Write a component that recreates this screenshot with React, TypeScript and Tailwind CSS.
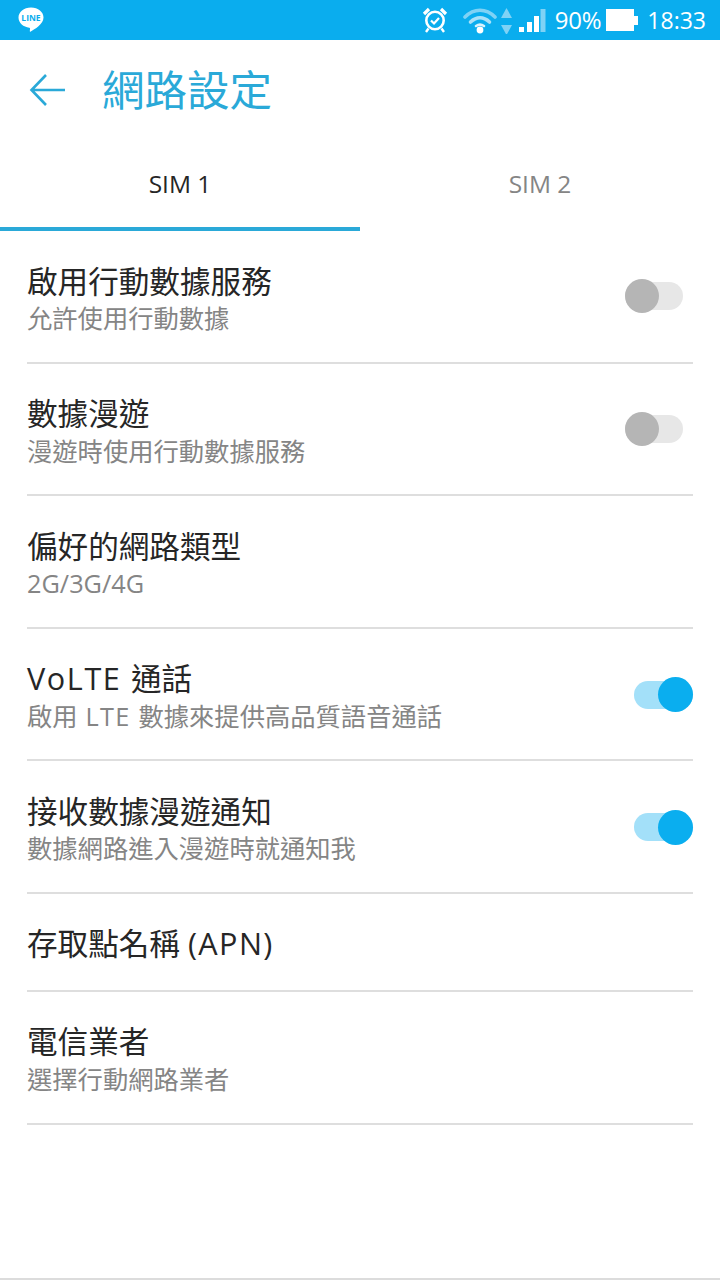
import type { ReactNode } from 'react';

const FONT = "font-['Open_Sans','Noto_Sans_CJK_TC',sans-serif]";

interface RowProps {
  title: ReactNode;
  subtitle?: ReactNode;
  toggle?: 'on' | 'off';
  short?: boolean;
}

const rows: RowProps[] = [
  { title: '啟用行動數據服務', subtitle: '允許使用行動數據', toggle: 'off' },
  { title: '數據漫遊', subtitle: '漫遊時使用行動數據服務', toggle: 'off' },
  { title: '偏好的網路類型', subtitle: '2G/3G/4G' },
  {
    title: (
      <>
        <span className="tracking-[1.6px]">VoLTE </span>通話
      </>
    ),
    subtitle: (
      <>
        啟用<span className="tracking-[1.3px]"> LTE </span>數據來提供高品質語音通話
      </>
    ),
    toggle: 'on',
  },
  { title: '接收數據漫遊通知', subtitle: '數據網路進入漫遊時就通知我', toggle: 'on' },
  {
    title: (
      <>
        存取點名稱 <span className="tracking-[1.4px]">(APN)</span>
      </>
    ),
    short: true,
  },
  { title: '電信業者', subtitle: '選擇行動網路業者' },
];

function Toggle({ on }: { on: boolean }) {
  if (on) {
    return (
      <div className="flex h-[28px] w-[59px] items-center justify-end rounded-full bg-[#a3e0f9]">
        <div className="h-[35px] w-[35px] shrink-0 rounded-full bg-[#0aaeef]" />
      </div>
    );
  }
  return (
    <div className="mr-[10px] flex h-[28px] w-[58px] items-center rounded-full bg-[#e7e7e7]">
      <div className="h-[34px] w-[34px] shrink-0 rounded-full bg-[#b5b5b5]" />
    </div>
  );
}

function Row(props: RowProps) {
  return (
    <div
      className={`mx-[27px] flex items-start justify-between border-b-2 border-[#dedede] ${
        props.short ? 'h-[98px]' : 'h-[132.6px]'
      }`}
    >
      <div className="pt-[29.5px]">
        <p className="text-[30.6px] leading-[40px] text-[#262626]">{props.title}</p>
        {props.subtitle && (
          <p className="mt-[-0.5px] text-[25.3px] leading-[36px] text-[#858585]">{props.subtitle}</p>
        )}
      </div>
      {props.toggle && (
        <div className={props.toggle === 'on' ? 'pt-[52px]' : 'pt-[51px]'}>
          <Toggle on={props.toggle === 'on'} />
        </div>
      )}
    </div>
  );
}

function StatusBar() {
  return (
    <div className="flex h-[40px] items-center justify-between bg-[#0aadee] pl-[17px] pr-[14px] text-white">
      <svg width="28" height="28" viewBox="0 0 28 28">
        <path
          d="M14 1.5C6.8 1.5 1.5 6 1.5 11.6c0 5.4 5 9.6 10.8 10.2.6.1.8.5.7 1.1l-.2 2c-.1.7.4 1 1 .6 3.6-2.2 12.7-7.2 12.7-14C26.5 6 21.2 1.5 14 1.5z"
          fill="#fff"
        />
        <text
          x="14"
          y="15"
          textAnchor="middle"
          fontSize="8.5"
          fontWeight="700"
          fill="#0aadee"
          fontFamily="Open Sans, sans-serif"
        >
          LINE
        </text>
      </svg>
      <div className="flex items-center">
        <svg width="26" height="28" viewBox="0 0 26 28" fill="none" stroke="#fff" strokeWidth="2.6">
          <circle cx="13" cy="14.5" r="8.7" />
          <path d="M9 14.5l3 3 5-5.5" strokeWidth="2.2" />
          <path d="M2 8L7 3M24 8L19 3" strokeWidth="3.2" />
          <path d="M6.5 22.5l-2.5 3.5M19.5 22.5l2.5 3.5" strokeWidth="2.4" />
        </svg>
        <svg className="ml-[15px]" width="34" height="28" viewBox="0 0 34 28" fill="none" strokeLinecap="round">
          <path d="M2 11C11 2 23 2 32 11" stroke="#7fd2f5" strokeWidth="3.6" />
          <path d="M7.5 16c6-5.5 13-5.5 19 0" stroke="#a9e1f9" strokeWidth="3.6" />
          <path d="M13 20c2.6-1.8 5.4-1.8 8 0" stroke="#d9f2fc" strokeWidth="2.6" />
          <circle cx="17" cy="24" r="3.4" fill="#fff" />
        </svg>
        <svg className="ml-[3px]" width="13" height="28" viewBox="0 0 13 28">
          <path d="M6.5 2l5.5 10H1z" fill="#7fd2f5" />
          <path d="M6.5 29l5.5-10H1z" fill="#7fd2f5" />
        </svg>
        <svg className="ml-[5px]" width="28" height="28" viewBox="0 0 28 28">
          <rect x="1" y="21" width="5" height="5" fill="#fff" />
          <rect x="9" y="16" width="5" height="10" fill="#fff" />
          <rect x="16" y="10" width="5" height="16" fill="#fff" />
          <rect x="22.500" y="3" width="5" height="23" fill="#7fd2f5" />
        </svg>
        <span className="ml-[9px] text-[24px] leading-none tracking-[-0.2px]">90%</span>
        <div className="ml-[5px] flex items-center">
          <div className="h-[22px] w-[28px] bg-white" />
          <div className="h-[9px] w-[4px] bg-white" />
        </div>
        <span className="ml-[9px] text-[23px] leading-none">18:33</span>
      </div>
    </div>
  );
}

export default function App() {
  return (
    <div className={`relative flex h-[1280px] w-[720px] flex-col overflow-hidden bg-white ${FONT}`}>
      <StatusBar />
      <div className="flex h-[100px] items-center pl-[29px]">
        <svg width="38" height="38" viewBox="0 0 38 38" fill="none" stroke="#2aa9d8" strokeWidth="2.6">
          <path d="M36 19H3M17 4L2.5 19 17 34" />
        </svg>
        <h1 className="ml-[35px] text-[42.5px] font-normal leading-none text-[#2aa9d8]">網路設定</h1>
      </div>
      <div className="flex h-[91px]">
        <div className="flex w-[360px] items-center justify-center border-b-4 border-[#2aa9d8] pt-[2px] text-[24.5px] text-[#262626]">
          SIM 1
        </div>
        <div className="flex w-[360px] items-center justify-center pb-[2px] text-[24.5px] text-[#858585]">
          SIM 2
        </div>
      </div>
      {rows.map((row, i) => (
        <Row key={i} {...row} />
      ))}
      <div className="absolute bottom-0 left-0 h-[2px] w-full bg-[#dcdcdc]" />
    </div>
  );
}
